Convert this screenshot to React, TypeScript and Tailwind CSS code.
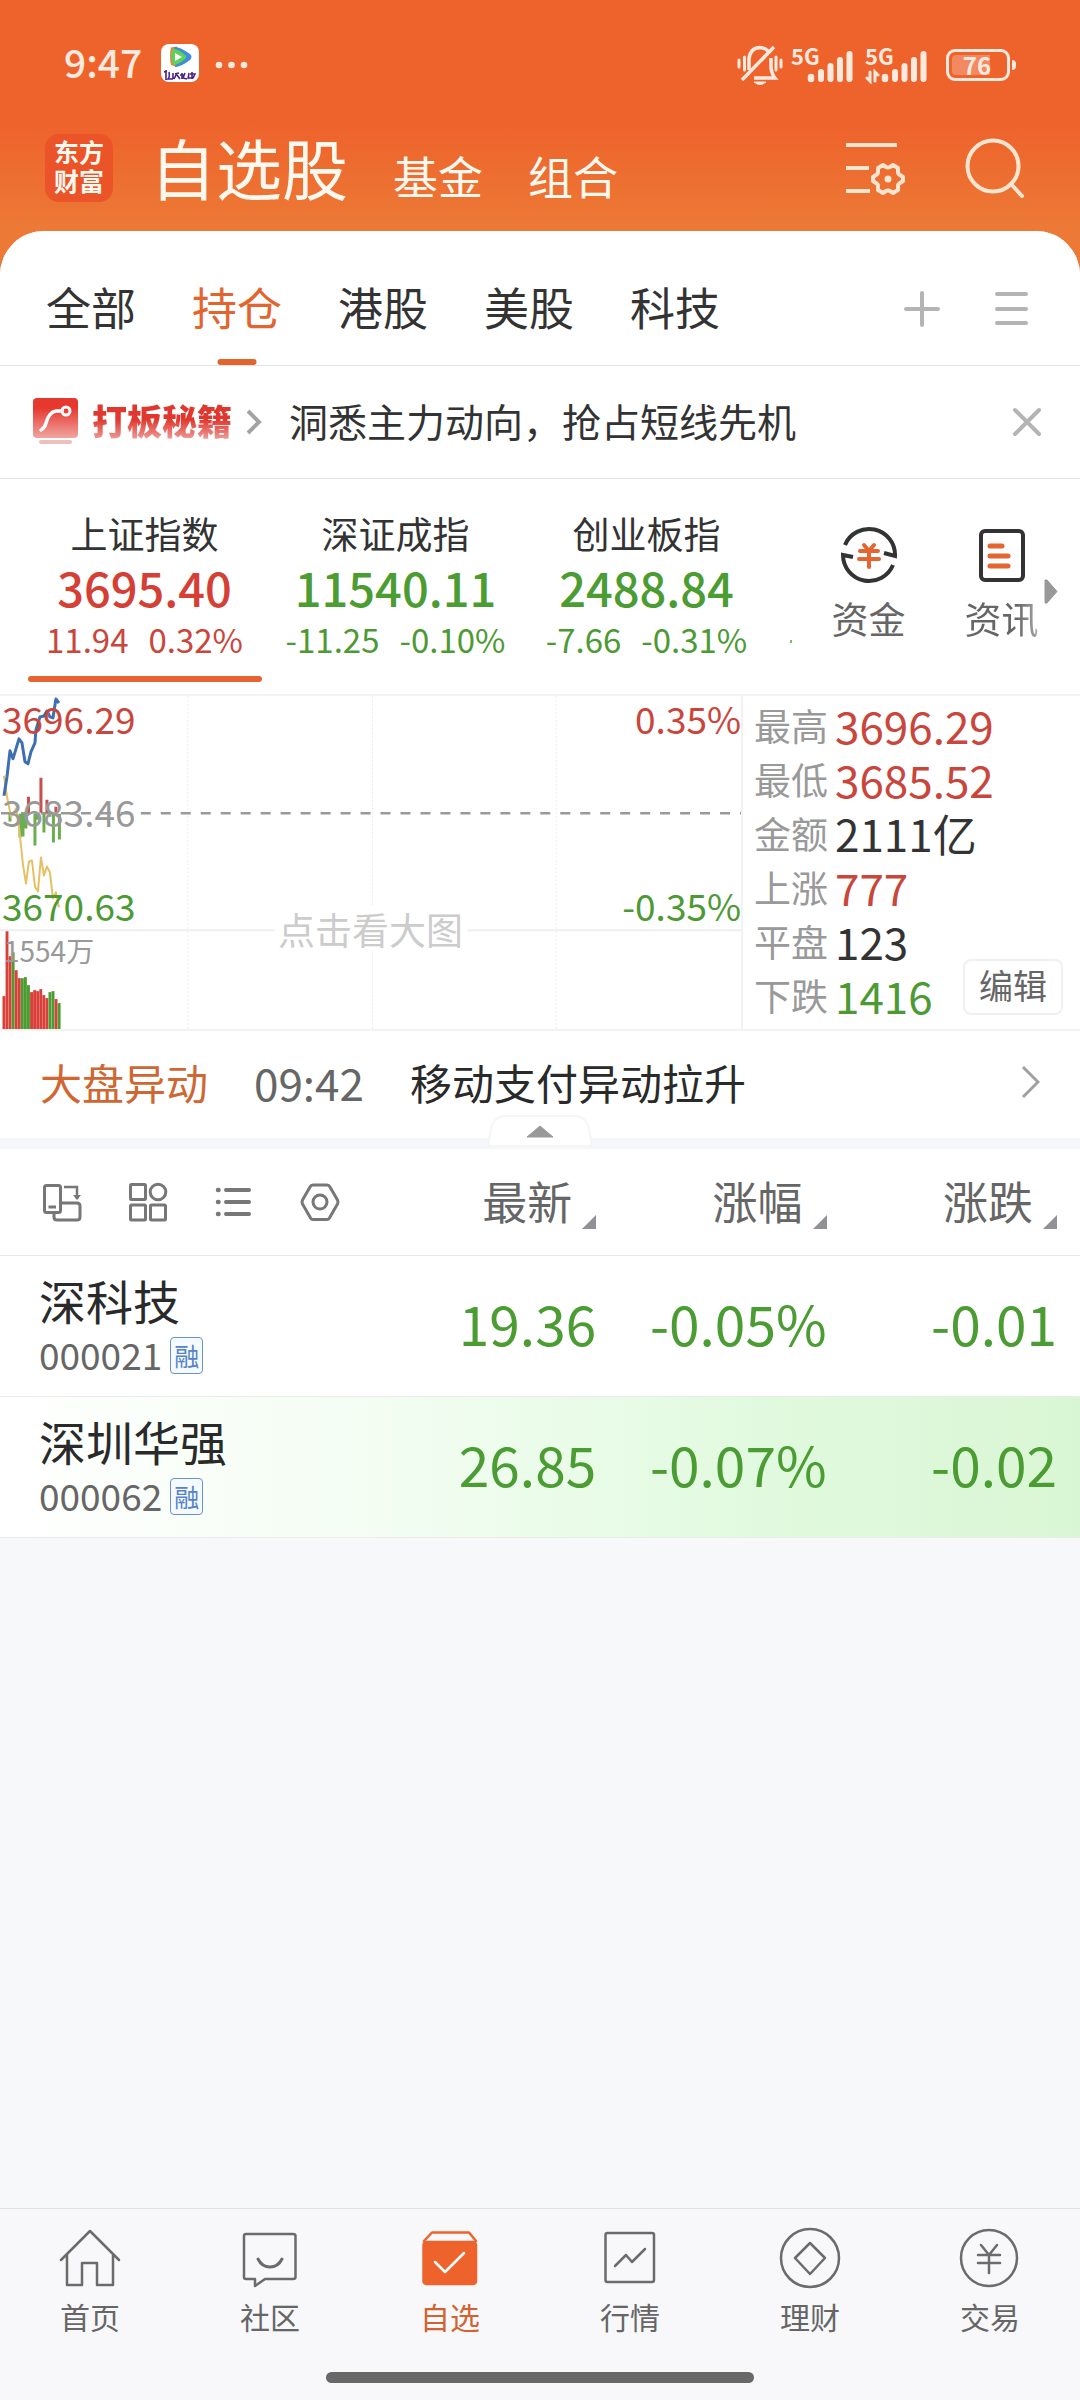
import type { ReactNode } from 'react';

const topTabs = ['全部', '持仓', '港股', '美股', '科技'];

const indexes = [
  { name: '上证指数', value: '3695.40', change: '11.94', percent: '0.32%', up: true, active: true },
  { name: '深证成指', value: '11540.11', change: '-11.25', percent: '-0.10%', up: false, active: false },
  { name: '创业板指', value: '2488.84', change: '-7.66', percent: '-0.31%', up: false, active: false },
];

const stats = [
  { label: '最高', value: '3696.29', color: 'text-[#c9463d]' },
  { label: '最低', value: '3685.52', color: 'text-[#c9463d]' },
  { label: '金额', value: '2111亿', color: 'text-[#333]' },
  { label: '上涨', value: '777', color: 'text-[#c9463d]' },
  { label: '平盘', value: '123', color: 'text-[#333]' },
  { label: '下跌', value: '1416', color: 'text-[#4d9a35]' },
];

const stocks = [
  { name: '深科技', code: '000021', price: '19.36', percent: '-0.05%', change: '-0.01', flash: false },
  { name: '深圳华强', code: '000062', price: '26.85', percent: '-0.07%', change: '-0.02', flash: true },
];

const volumes = [
  { top: 303, up: true },
  { top: 238, up: true },
  { top: 263, up: true },
  { top: 259, up: false },
  { top: 277, up: true },
  { top: 285, up: true },
  { top: 285, up: false },
  { top: 284, up: false },
  { top: 292, up: false },
  { top: 299, up: true },
  { top: 297, up: true },
  { top: 298, up: true },
  { top: 296, up: true },
  { top: 302, up: true },
  { top: 305, up: true },
  { top: 299, up: false },
  { top: 298, up: false },
  { top: 306, up: true },
  { top: 310, up: false },
];

export default function App() {
  return (
    <div className="flex min-h-screen flex-col bg-[linear-gradient(to_bottom,#ee622b_120px,#ec7a36_231px)] font-['Noto_Sans_CJK_SC',sans-serif] text-[#333]">
      <StatusBar />
      <Header />
      <main className="flex flex-1 flex-col overflow-hidden rounded-t-[44px] bg-[#f7f8fa]">
        <GroupTabs />
        <Banner />
        <IndexStrip />
        <section className="flex border-y-2 border-[#f3f3f3] bg-white">
          <TrendChart />
          <MarketStats />
        </section>
        <News />
        <StockTable />
      </main>
      <BottomNav />
    </div>
  );
}

function StatusBar() {
  return (
    <div className="flex h-[122px] items-center px-16 text-[#fee9df]">
      <span className="text-[39px] leading-10 font-medium">9:47</span>
      <svg className="mt-1 ml-[19px] size-[38px]" viewBox="0 0 38 38">
        <rect width="38" height="38" rx="8" fill="#fff" />
        <path d="M10 3.5 Q8 12 10 21 L16 23 V2.500 Z" fill="#e8823a" />
        <path d="M13 3 Q18 2 29 10 Q32 13 29 16 Q20 23 14 23 Q17 12 13 3Z" fill="#3f8fd8" />
        <path d="M11 5 Q17 4 24 11 Q26 13 24 15 Q17 21 12 21 Q9 13 11 5Z" fill="#5fd05a" />
        <path d="M14 9 L21 13 L14 17Z" fill="#fff" />
        <path
          d="M3 28 L6 27 M5 26 V36 M8 28 Q9 33 7 35 H12 M12 29 V35 M14 30 L18 29 M16 29 L13 35 M16 31 L19 35 M21 29 V35 M19 31 H24 M24 29 L22 34 L26 35 M28 29 L27 35 M29 30 H34 L32 34 H28 M31 28 V35"
          fill="none"
          stroke="#4b2390"
          strokeWidth="1.600"
        />
      </svg>
      <svg className="mt-2 ml-4 h-2 w-[34px]" viewBox="0 0 34 8" fill="currentColor">
        <circle cx="4" cy="4" r="3.300" />
        <circle cx="16.500" cy="4" r="3.300" />
        <circle cx="29" cy="4" r="3.300" />
      </svg>
      <div className="mt-2 ml-auto flex items-center gap-2">
        <svg className="h-[42px] w-[46px]" viewBox="0 0 46 42" fill="none" stroke="currentColor" strokeWidth="3.500">
          <path d="M2 16 V23 M7.500 13 V26 M39 13 V26 M44 16 V23" strokeLinecap="round" strokeWidth="3" />
          <path d="M12 26 V15 Q13 4 23 3.500 Q28 4 31 7 M34 14 V22 Q34 29 38 34 H17" />
          <path d="M5 36 L37 3" />
          <path d="M17 38 H29 Q23 43 17 38Z" fill="currentColor" strokeWidth="1" />
        </svg>
        <Signal />
        <Signal arrows />
        <div className="flex items-center gap-[2px] pl-[7px]">
          <div className="flex h-[32px] w-[64px] items-center rounded-[9px] border-3 border-current p-[3px]">
            <span className="flex h-full w-[38px] items-center justify-center rounded-l-[4px] bg-white/25 pl-3 text-[24px] leading-6 font-bold">
              76
            </span>
          </div>
          <span className="h-[10px] w-[4px] rounded-r bg-current" />
        </div>
      </div>
    </div>
  );
}

function Signal({ arrows = false }: { arrows?: boolean }) {
  return (
    <div className="relative h-[38px] w-[66px]">
      <span className="absolute top-0 left-0 text-[22px] leading-[18px] font-bold">5G</span>
      <svg className="h-full w-full" viewBox="0 0 66 38" fill="none" stroke="currentColor" strokeLinecap="round">
        <path d="M20 33 V31" strokeWidth="6.500" />
        <path d="M30 33 V26 M39.500 33 V20 M49 33 V14 M58.500 33 V8" strokeWidth="6" />
        {arrows && <path d="M5 26 V35 L2 32 M10 35 V26 L13 29" strokeWidth="3" />}
      </svg>
    </div>
  );
}

function Header() {
  return (
    <header className="flex h-[109px] items-center pr-[55px] pb-[18px] pl-[45px] text-[#fff8ee]">
      <div className="flex size-[68px] shrink-0 flex-col items-center justify-center rounded-[14px] bg-[#eb5328] pb-1 text-[25px] leading-[29px] font-bold">
        <span>东方</span>
        <span>财富</span>
      </div>
      <nav className="ml-[37px] flex items-end gap-[45px] pb-1">
        <a href="#watchlist" className="text-[66px] leading-[68px]">
          自选股
        </a>
        <a href="#funds" className="text-[45px] leading-[48px]">
          基金
        </a>
        <a href="#portfolio" className="text-[45px] leading-[48px]">
          组合
        </a>
      </nav>
      <div className="ml-auto flex items-center gap-[60px] text-[#fee5d0]">
        <button type="button" aria-label="列表设置">
          <svg className="h-[54px] w-[60px]" viewBox="0 0 60 54" fill="none" stroke="currentColor" strokeWidth="4">
            <path d="M1 4 H52 M1 27 H24 M1 50 H25" />
            <path
              d="M38 24 L41 26 Q43 27 45 26 L48 24 L53 27 V31 Q53 33 55 34 L58 36 V40 L55 42 Q53 43 53 45 V49 L48 52 L45 50 Q43 49 41 50 L38 52 L33 49 V45 Q33 43 31 42 L28 40 V36 L31 34 Q33 33 33 31 V27Z"
              strokeLinejoin="round"
            />
            <circle cx="43" cy="38" r="3.500" fill="currentColor" stroke="none" />
          </svg>
        </button>
        <button type="button" aria-label="搜索">
          <svg className="size-[60px]" viewBox="0 0 60 60" fill="none" stroke="currentColor" strokeWidth="4">
            <circle cx="28" cy="28" r="25.500" />
            <path d="M46 46 L57 58" strokeLinecap="round" />
          </svg>
        </button>
      </div>
    </header>
  );
}

function GroupTabs() {
  return (
    <div className="flex h-[135px] items-stretch border-b border-[#e4e4e4] bg-white pr-[50px] pl-[46px]">
      <nav className="flex gap-[56px]">
        {topTabs.map((tab) => {
          const active = tab === '持仓';
          return (
            <button
              key={tab}
              type="button"
              className={`relative pt-[18px] text-[45px] leading-[48px] ${active ? 'text-[#e2652f]' : 'text-[#333]'}`}
            >
              {tab}
              {active && (
                <span className="absolute bottom-0 left-1/2 h-[6px] w-[39px] -translate-x-1/2 rounded-full bg-[#e2652f]" />
              )}
            </button>
          );
        })}
      </nav>
      <div className="ml-auto flex items-center gap-[54px] pt-[22px] text-[#b4b4b4]">
        <button type="button" aria-label="添加分组">
          <svg className="size-[36px]" viewBox="0 0 36 36" stroke="currentColor" strokeWidth="4" strokeLinecap="round">
            <path d="M2 18 H34 M18 2 V34" />
          </svg>
        </button>
        <button type="button" aria-label="管理分组">
          <svg className="size-[36px]" viewBox="0 0 36 36" stroke="currentColor" strokeWidth="4" strokeLinecap="round">
            <path d="M3 3 H32 M3 18 H32 M3 32 H32" />
          </svg>
        </button>
      </div>
    </div>
  );
}

function Banner() {
  return (
    <div className="flex h-[113px] items-center border-b border-[#e4e4e4] bg-white pr-[38px] pl-[33px]">
      <svg className="h-[48px] w-[45px] shrink-0" viewBox="0 0 45 48">
        <defs>
          <linearGradient id="badge" x1="0" y1="0" x2="0" y2="1">
            <stop offset="0.250" stopColor="#e6382e" />
            <stop offset="1" stopColor="#f0a5a1" />
          </linearGradient>
        </defs>
        <rect width="45" height="40" rx="4" fill="url(#badge)" />
        <rect x="6" y="42" width="33" height="4" rx="2" fill="#f0bfbc" />
        <path d="M8 32 Q12 30 13 25 Q16 14 23 13 H29" fill="none" stroke="#fff" strokeWidth="3.500" strokeLinecap="round" />
        <circle cx="33" cy="13" r="4" fill="none" stroke="#fff" strokeWidth="3" />
      </svg>
      <a href="#secrets" className="ml-[14px] flex items-center gap-[14px]">
        <span className="bg-[linear-gradient(to_bottom,#e0382f_45%,#f0a5a1_90%)] bg-clip-text pb-1 text-[35px] leading-[44px] font-black text-transparent">
          打板秘籍
        </span>
        <svg className="h-[26px] w-[16px]" viewBox="0 0 16 26" fill="none" stroke="#a3a3a3" strokeWidth="4">
          <path d="M2 2 L13 13 L2 24" />
        </svg>
      </a>
      <p className="ml-[27px] pb-1 text-[39px] leading-[44px] whitespace-nowrap">洞悉主力动向，抢占短线先机</p>
      <button type="button" aria-label="关闭" className="ml-auto">
        <svg className="size-[30px]" viewBox="0 0 30 30" stroke="#b4b4b4" strokeWidth="4" strokeLinecap="round">
          <path d="M3 3 L27 27 M27 3 L3 27" />
        </svg>
      </button>
    </div>
  );
}

function IndexStrip() {
  return (
    <section className="relative flex bg-white pr-3 pl-[19px]">
      <div className="flex flex-1 items-start">
        {indexes.map((item) => (
          <button key={item.name} type="button" className="flex w-[251px] flex-col items-center pt-[30px] pb-3">
            <span className="text-[37px] leading-[48px]">{item.name}</span>
            <span
              className={`text-[47px] leading-[60px] font-medium ${item.up ? 'text-[#d43f36]' : 'text-[#4b9c32]'}`}
            >
              {item.value}
            </span>
            <span
              className={`flex gap-5 text-[33px] leading-[44px] ${item.up ? 'text-[#c9463d]' : 'text-[#4d9a35]'}`}
            >
              <span>{item.change}</span>
              <span>{item.percent}</span>
            </span>
            <span className={`mt-[15px] h-[6px] w-[234px] rounded-full ${item.active ? 'bg-[#e66432]' : ''}`} />
          </button>
        ))}
        <span className="mt-[161px] ml-[18px] h-[3px] w-[2px] bg-[#4d9a35]/70" />
      </div>
      <div className="flex shrink-0 pt-[47px] text-[37px] leading-[48px] text-[#666]">
        <button type="button" className="flex w-[133px] flex-col items-center gap-[10px]">
          <svg className="size-[58px]" viewBox="0 0 58 58" fill="none" stroke="#333" strokeWidth="4">
            <path d="M5 19 A26 26 0 0 1 55 30 L44 27" />
            <path d="M53 39 A26 26 0 0 1 3 29 L13 31" />
            <path
              d="M24 19 L29 25 L34 19 M20 25 H38 M19 33 H39 M29 25 V41"
              stroke="#e4652f"
              strokeLinecap="round"
            />
          </svg>
          资金
        </button>
        <button type="button" className="flex w-[133px] flex-col items-center gap-[10px]">
          <svg className="size-[58px]" viewBox="0 0 58 58" fill="none" stroke="#333" strokeWidth="4">
            <rect x="8" y="5" width="42" height="49" rx="4" />
            <path d="M17 20 H29 M17 30 H35 M17 40 H35" stroke="#e4652f" strokeLinecap="round" strokeWidth="5" />
          </svg>
          <span className="bg-[linear-gradient(to_right,#666_70%,#aaa)] bg-clip-text text-transparent">资讯</span>
        </button>
      </div>
      <svg className="absolute top-[100px] right-[22px] h-[25px] w-[14px]" viewBox="0 0 14 25">
        <path d="M1 1 H3 L13 12.500 L3 24 H1Z" fill="#999" stroke="#999" strokeLinejoin="round" />
      </svg>
    </section>
  );
}

function TrendChart() {
  return (
    <div className="relative h-[333px] w-[68.8%] shrink-0 border-r-2 border-[#f2f2f2] text-[37px] leading-[44px]">
      <svg className="absolute inset-0 h-full w-full" viewBox="0 2 742 334" preserveAspectRatio="none" fill="none">
        <path d="M188 2 V336 M373 2 V336 M557 2 V336" stroke="#ececec" strokeDasharray="2 2" />
        <path d="M0 237 H742" stroke="#efefef" strokeWidth="2" />
        <path d="M1 119.500 H742" stroke="#999" strokeWidth="2.500" strokeDasharray="10 10" />
        <path d="M28.500 119 V103 M41 119 V84 M47 119 V106 M56 119 V113" stroke="#c9504a" strokeWidth="3" />
        <path
          d="M10 120 V128 M20 120 V144 M23 120 V143 M26 120 V135 M35 120 V152 M38 120 V126 M44 120 V139 M50 120 V123 M53.500 120 V149 M59.500 120 V146"
          stroke="#6cae4e"
          strokeWidth="3"
        />
        <path
          d="M4 82 L7 103 L11 123 L16 115 L19 133 L23 171 L26 190 L29 168 L32 167 L35 193 L38 198 L41 164 L44 182 L47 173 L50 179 L53 205 L56 199 L59 214"
          stroke="#e8c064"
          strokeWidth="2"
          strokeLinejoin="round"
        />
        <path
          d="M4 102 L7 83 L10 57 L13 65 L19 45 L22 49 L25 68 L28 70 L31 58 L35 49 L36 36 L40 23 L44 22 L47 17 L50 23 L53 24 L56 5 L59 9"
          stroke="#3e6fb0"
          strokeWidth="3"
          strokeLinejoin="round"
        />
        {volumes.map((bar, i) => (
          <rect
            key={i}
            x={2.5 + i * 3.07}
            y={bar.top}
            width="2.900"
            height={336 - bar.top}
            fill={bar.up ? '#d9403a' : '#4b9c32'}
          />
        ))}
      </svg>
      <span className="absolute top-0 left-[2px] text-[#c9463d]">3696.29</span>
      <span className="absolute top-[93px] left-[2px] text-[#999]">3683.46</span>
      <span className="absolute top-[187px] left-[2px] text-[#4d9a35]">3670.63</span>
      <span className="absolute top-0 right-0 text-[#c9463d]">0.35%</span>
      <span className="absolute top-[187px] right-0 text-[#4d9a35]">-0.35%</span>
      <span className="absolute top-[238px] left-[4px] text-[28px] leading-8 text-[#999]">1554万</span>
      <button
        type="button"
        className="absolute top-[211px] left-1/2 -translate-x-1/2 bg-white px-1 whitespace-nowrap text-[#ccc]"
      >
        点击看大图
      </button>
    </div>
  );
}

function MarketStats() {
  return (
    <div className="relative flex-1 pt-[2px] pl-[11px]">
      <dl>
        {stats.map(({ label, value, color }) => (
          <div key={label} className="flex h-[54px] items-center gap-[7px]">
            <dt className="text-[37px] leading-[54px] text-[#999]">{label}</dt>
            <dd className={`text-[44px] leading-[54px] ${color}`}>{value}</dd>
          </div>
        ))}
      </dl>
      <button
        type="button"
        className="absolute right-[17px] bottom-[14px] h-[56px] w-[100px] rounded-lg border-2 border-[#f0f0f0] bg-white pb-1 text-[34px] leading-[44px] text-[#666]"
      >
        编辑
      </button>
    </div>
  );
}

function News() {
  return (
    <section className="relative border-b-[11px] border-[#f5f7fa] bg-white">
      <a href="#news" className="flex h-[107px] items-center gap-[46px] pr-10 pb-[6px] pl-10 text-[42px] leading-[48px]">
        <span className="text-[#cf6732]">大盘异动</span>
        <time className="text-[44px] text-[#666]">09:42</time>
        <span className="text-[#2a2a2a]">移动支付异动拉升</span>
        <svg className="ml-auto h-[34px] w-[20px]" viewBox="0 0 20 34" fill="none" stroke="#a0a0a0" strokeWidth="3">
          <path d="M3 2 L18 17 L3 32" />
        </svg>
      </a>
      <button type="button" aria-label="收起" className="absolute -bottom-[9px] left-1/2 -translate-x-1/2">
        <svg className="h-[32px] w-[106px]" viewBox="0 0 106 32">
          <path
            d="M1 31 L4 13 Q7 1 20 1 H86 Q99 1 102 13 L105 31Z"
            fill="#fff"
            stroke="#f5f5f5"
            strokeWidth="2"
          />
          <path d="M40 22 L53 11 L66 22Z" fill="#999" stroke="#999" strokeLinejoin="round" />
        </svg>
      </button>
    </section>
  );
}

function ToolButton({ label, children }: { label: string; children: ReactNode }) {
  return (
    <button type="button" aria-label={label}>
      <svg className="size-[42px]" viewBox="0 0 42 42" fill="none" stroke="#777" strokeWidth="3">
        {children}
      </svg>
    </button>
  );
}

function StockTable() {
  return (
    <table className="w-full table-fixed border-collapse bg-white">
      <thead>
        <tr className="h-[106px] border-b border-[#e8e8e8] text-[45px] leading-[56px] text-[#666]">
          <th className="w-[36%] pl-[41px]">
            <div className="flex gap-[44px]">
              <ToolButton label="横屏">
                <rect x="3.500" y="4.500" width="16" height="27" rx="2" />
                <path d="M7.500 26 H15" />
                <path d="M13 32 V36 Q13 39 16 39 H36 Q39 39 39 36 V25 Q39 22 36 22 H20" />
                <path d="M23 6 H36 V18" strokeWidth="2.500" />
                <path d="M32 14 H40 L36 19Z" fill="#777" stroke="none" />
              </ToolButton>
              <ToolButton label="宫格">
                <rect x="3.500" y="3.500" width="15" height="15" rx="1" />
                <circle cx="31" cy="11" r="7.800" />
                <rect x="3.500" y="24" width="15" height="15" rx="1" />
                <rect x="23.500" y="24" width="15" height="15" rx="1" />
              </ToolButton>
              <ToolButton label="列表">
                <path d="M13 9 H36 M13 21 H36 M13 33 H36" strokeWidth="4" strokeLinecap="round" />
                <path d="M5 9 H5.500 M5 21 H5.500 M5 33 H5.500" strokeWidth="4.500" strokeLinecap="round" />
              </ToolButton>
              <ToolButton label="设置">
                <path
                  d="M14 4 H28 Q30 4 31 6 L38.500 19 Q39.500 21 38.500 23 L31 36 Q30 38.500 28 38.500 H14 Q12 38.500 11 36 L3.500 23 Q2.500 21 3.500 19 L11 6 Q12 4 14 4Z"
                  strokeLinejoin="round"
                />
                <circle cx="21" cy="21" r="7" />
              </ToolButton>
            </div>
          </th>
          {['最新', '涨幅', '涨跌'].map((title) => (
            <th key={title} scope="col" className="pr-[23px] pb-[2px] font-normal">
              <button type="button" className="ml-auto flex items-end gap-[10px]">
                {title}
                <svg className="size-[14px]" viewBox="0 0 14 14">
                  <path d="M14 0 V14 H0Z" fill="#919196" />
                </svg>
              </button>
            </th>
          ))}
        </tr>
      </thead>
      <tbody>
        {stocks.map((stock) => (
          <tr
            key={stock.code}
            className={`h-[141px] border-b border-[#ebebeb] text-right text-[55px] text-[#4b9c32] ${
              stock.flash ? 'bg-[linear-gradient(to_right,#fff,#f3fdf2_35%,#e1fadf_70%,#d9f6d4)]' : ''
            }`}
          >
            <td className="pb-[2px] pl-[39px] text-left">
              <div className="text-[47px] leading-[58px] whitespace-nowrap text-[#2a2a2a]">{stock.name}</div>
              <div className="flex items-center gap-2 text-[37px] leading-[50px] text-[#666]">
                {stock.code}
                <span className="mt-1 flex h-[37px] w-[33px] items-center justify-center rounded-[4px] border border-[#6a92c4] bg-[#f4faff] pb-[2px] text-[25px] leading-8 text-[#5583c4]">
                  融
                </span>
              </div>
            </td>
            <td className="pr-[23px] pb-[6px]">{stock.price}</td>
            <td className="pr-[23px] pb-[6px]">{stock.percent}</td>
            <td className="pr-[23px] pb-[6px]">{stock.change}</td>
          </tr>
        ))}
      </tbody>
    </table>
  );
}

function NavItem({ label, active = false, children }: { label: string; active?: boolean; children: ReactNode }) {
  return (
    <a
      href="#nav"
      className={`flex flex-1 flex-col items-center gap-[6px] text-[30px] leading-[44px] ${
        active ? 'text-[#d2622f]' : 'text-[#666]'
      }`}
    >
      <svg
        className="size-[60px] overflow-visible"
        viewBox="0 0 60 60"
        fill="none"
        stroke={active ? '#ee622b' : '#6b6b6b'}
        strokeWidth="2.500"
        strokeLinecap="round"
        strokeLinejoin="round"
      >
        {children}
      </svg>
      {label}
    </a>
  );
}

function BottomNav() {
  return (
    <footer className="border-t border-[#e2e2e4] bg-[#f8f8fa] pt-[19px]">
      <nav className="flex">
        <NavItem label="首页">
          <path d="M1 32 L30 3 L59 32 M7 27 V57 H22 V35 H37 V57 H53 V27" />
        </NavItem>
        <NavItem label="社区">
          <path d="M6 6 H53 Q55.500 6 55.500 8 V49 Q55.500 51 53 51 H25 L15 58 V51 H6 Q4 51 4 49 V8 Q4 6 6 6Z" />
          <path d="M18 31 Q22 39 30 39 Q38 39 42 31" strokeWidth="3" />
        </NavItem>
        <NavItem label="自选" active>
          <path d="M4 13 L12 4.500 H49 L56 13" />
          <rect x="3.500" y="14" width="52.500" height="42" rx="3" fill="#ee622b" />
          <path d="M15 34 L25 44 L44 25" stroke="#fff" />
        </NavItem>
        <NavItem label="行情">
          <rect x="5.500" y="5" width="48.500" height="49" rx="2" />
          <path d="M15 38 L26 27 L32 34 L45 21" />
        </NavItem>
        <NavItem label="理财">
          <circle cx="30" cy="30" r="29" />
          <path d="M30 15 L45 30 L30 46 L15 30Z" />
        </NavItem>
        <NavItem label="交易">
          <circle cx="29" cy="30" r="28" />
          <path d="M21 17 L29 27 L37 17 M18 27 H40 M18 35 H40 M29 27 V45" />
        </NavItem>
      </nav>
      <div className="mx-auto mt-[34px] mb-[17px] h-[11px] w-[428px] rounded-full bg-[#686868]" />
    </footer>
  );
}
